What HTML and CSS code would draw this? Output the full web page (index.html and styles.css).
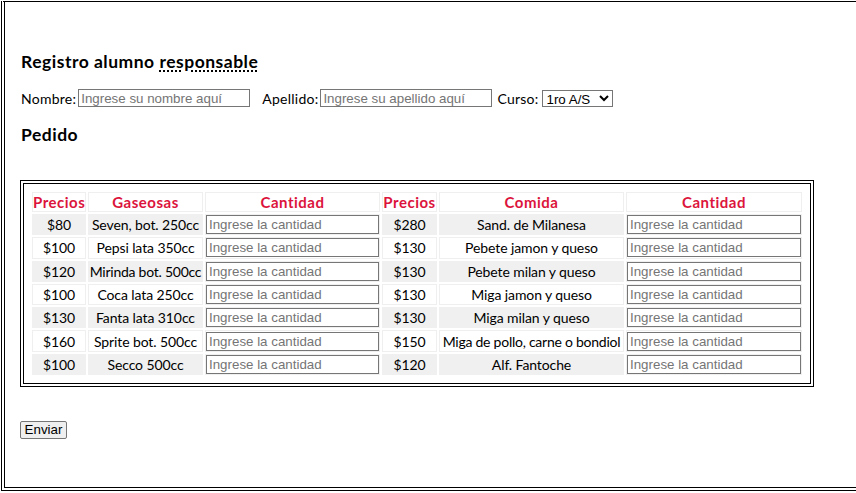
FILE: index.html
```html
<!DOCTYPE html>
<html lang="es">
<head>
<meta charset="utf-8">
<title>Registro alumno responsable</title>
<link rel="stylesheet" href="styles.css">
</head>
<body>
<div class="page">
  <h3 class="title">Registro alumno <span class="dotted">responsable</span></h3>
  <div class="form-row">
    <label class="lbl">Nombre:</label><input class="field" type="text" placeholder="Ingrese su nombre aquí">
    <label class="lbl lbl-wide">Apellido:</label><input class="field" type="text" placeholder="Ingrese su apellido aquí">
    <label class="lbl lbl-near">Curso:</label><select class="curso"><option>1ro A/S</option></select>
  </div>
  <h3 class="title title-pedido">Pedido</h3>
  <table class="order">
    <thead>
      <tr>
        <th class="c-price">Precios</th>
        <th class="c-drink">Gaseosas</th>
        <th class="c-qty">Cantidad</th>
        <th class="c-price2">Precios</th>
        <th class="c-food">Comida</th>
        <th class="c-qty2">Cantidad</th>
      </tr>
    </thead>
    <tbody>
      <tr class="alt">
        <td>$80</td><td>Seven, bot. 250cc</td><td><input class="qty" type="text" placeholder="Ingrese la cantidad"></td>
        <td>$280</td><td>Sand. de Milanesa</td><td><input class="qty" type="text" placeholder="Ingrese la cantidad"></td>
      </tr>
      <tr>
        <td>$100</td><td>Pepsi lata 350cc</td><td><input class="qty" type="text" placeholder="Ingrese la cantidad"></td>
        <td>$130</td><td>Pebete jamon y queso</td><td><input class="qty" type="text" placeholder="Ingrese la cantidad"></td>
      </tr>
      <tr class="alt">
        <td>$120</td><td class="tight">Mirinda bot. 500cc</td><td><input class="qty" type="text" placeholder="Ingrese la cantidad"></td>
        <td>$130</td><td>Pebete milan y queso</td><td><input class="qty" type="text" placeholder="Ingrese la cantidad"></td>
      </tr>
      <tr>
        <td>$100</td><td>Coca lata 250cc</td><td><input class="qty" type="text" placeholder="Ingrese la cantidad"></td>
        <td>$130</td><td>Miga jamon y queso</td><td><input class="qty" type="text" placeholder="Ingrese la cantidad"></td>
      </tr>
      <tr class="alt">
        <td>$130</td><td>Fanta lata 310cc</td><td><input class="qty" type="text" placeholder="Ingrese la cantidad"></td>
        <td>$130</td><td>Miga milan y queso</td><td><input class="qty" type="text" placeholder="Ingrese la cantidad"></td>
      </tr>
      <tr>
        <td>$160</td><td>Sprite bot. 500cc</td><td><input class="qty" type="text" placeholder="Ingrese la cantidad"></td>
        <td>$150</td><td class="tight">Miga de pollo, carne o bondiol</td><td><input class="qty" type="text" placeholder="Ingrese la cantidad"></td>
      </tr>
      <tr class="alt">
        <td>$100</td><td>Secco 500cc</td><td><input class="qty" type="text" placeholder="Ingrese la cantidad"></td>
        <td>$120</td><td>Alf. Fantoche</td><td><input class="qty" type="text" placeholder="Ingrese la cantidad"></td>
      </tr>
    </tbody>
  </table>
  <button class="send" type="submit">Enviar</button>
</div>
</body>
</html>
```
FILE: styles.css
```css
html, body {
  margin: 0;
  padding: 0;
  overflow: hidden;
  background: #fff;
}

.page {
  box-sizing: border-box;
  margin: 1px 0 0 1px;
  width: 870px;
  height: 490px;
  border: 4px double #000;
  border-top: 1px solid #000;
  border-right: none;
  padding: 49px 0 0 15px;
  font-family: "Lato", "Open Sans", sans-serif;
  color: #000;
}

.title {
  margin: 0;
  font-size: 17.5px;
  line-height: 21px;
  font-weight: 700;
  letter-spacing: 0.5px;
  padding-left: 1px;
}

.dotted {
  text-decoration: underline dotted;
  text-decoration-thickness: 1.5px;
  text-underline-offset: 2px;
}

.form-row {
  display: flex;
  align-items: center;
  margin-top: 17px;
  height: 18px;
  font-size: 14px;
  letter-spacing: 0.25px;
}

.lbl {
  padding-left: 1px;
  margin-right: 2px;
}

.lbl-wide {
  margin-left: 11px;
}

.lbl-near {
  margin-left: 4px;
}

.field {
  box-sizing: border-box;
  width: 172px;
  height: 18px;
  margin: 0;
  padding: 0 2px;
  border: 1px solid #767676;
  font-family: "Liberation Sans", Arial, sans-serif;
  font-size: 13.33px;
  letter-spacing: 0;
}

.field::placeholder,
.qty::placeholder {
  color: #757575;
}

.curso {
  box-sizing: border-box;
  width: 71px;
  height: 17px;
  margin: 1px 0 0 1px;
  padding: 0;
  border: 1px solid #767676;
  border-radius: 0;
  background: #fff;
  font-family: "Liberation Sans", Arial, sans-serif;
  font-size: 13.33px;
  letter-spacing: 0;
}

.title-pedido {
  margin-top: 17px;
}

.order {
  margin-top: 35px;
  table-layout: fixed;
  width: 794px;
  border: 4px double #000;
  padding: 6px;
  border-spacing: 2px;
  font-size: 14px;
}

.order th,
.order td {
  box-sizing: border-box;
  padding: 0;
  border: 1px solid #efefef;
  text-align: center;
  white-space: nowrap;
  overflow: hidden;
}

.order th {
  height: 19.5px;
  color: #dc143c;
  font-weight: 700;
  font-size: 15px;
  letter-spacing: 0.5px;
  background: #fff;
}

.order td {
  height: 21.3px;
  background: #fff;
  letter-spacing: -0.1px;
}

.order tr.alt td {
  background: #f0f0f0;
  border-color: #f0f0f0;
}

.order td.tight {
  letter-spacing: -0.25px;
}

.c-price { width: 54px; }
.c-drink { width: 115px; }
.c-qty { width: 175px; }
.c-price2 { width: 55px; }
.c-food { width: 185px; }
.c-qty2 { width: 176px; }

.qty {
  display: block;
  box-sizing: border-box;
  width: 100%;
  height: 19px;
  margin: 0;
  padding: 0 2px;
  border: 1px solid #767676;
  background: #fff;
  font-family: "Liberation Sans", Arial, sans-serif;
  font-size: 13.33px;
  letter-spacing: 0;
}

.send {
  display: block;
  margin-top: 34px;
  box-sizing: border-box;
  width: 47px;
  height: 18px;
  padding: 0;
  border: 1px solid #767676;
  border-radius: 2px;
  background: #efefef;
  color: #000;
  font-family: "Liberation Sans", Arial, sans-serif;
  font-size: 13.33px;
  line-height: 16px;
}
```
